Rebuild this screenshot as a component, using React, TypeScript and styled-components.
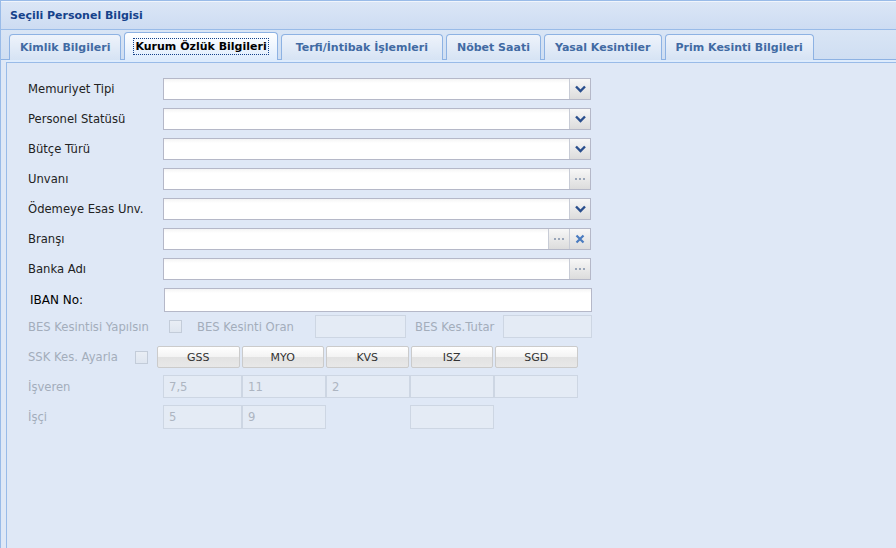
import React from "react";
import styled, { createGlobalStyle, css } from "styled-components";

const GlobalStyle = createGlobalStyle`
    html, body {
        margin: 0;
        padding: 0;
        background: #dfe8f6;
    }
    body {
        font-family: "DejaVu Sans", Tahoma, sans-serif;
        font-size: 11px;
    }
`;

const Panel = styled.div`
    width: 896px;
    height: 548px;
    box-sizing: border-box;
    display: flex;
    flex-direction: column;
    border-left: 1px solid #99bbe8;
    border-top: 1px solid #99bbe8;
    background: #dfe8f6;
    overflow: hidden;
`;

const Header = styled.div`
    height: 29px;
    box-sizing: border-box;
    display: flex;
    align-items: center;
    padding-left: 9px;
    border-top: 1px solid #f0f5fc;
    border-bottom: 1px solid #99bbe8;
    background: linear-gradient(#dbe6f6, #cddcf2);
    color: #15428b;
    font-weight: bold;
    font-size: 11px;
`;

const TabStrip = styled.div`
    height: 30px;
    box-sizing: border-box;
    display: flex;
    align-items: flex-end;
    gap: 3px;
    padding-left: 8px;
    border-bottom: 1px solid #8db2e3;
    background: linear-gradient(#d9e5f5, #cfdef2);
`;

const Tab = styled.div<{ $active?: boolean; $pad?: number }>`
    height: 26px;
    box-sizing: border-box;
    display: flex;
    align-items: center;
    padding: 0 ${(p) => p.$pad ?? 10}px;
    border: 1px solid #8db2e3;
    border-bottom: none;
    border-radius: 4px 4px 0 0;
    font-weight: bold;
    font-size: 11px;
    color: #416aa3;
    background: linear-gradient(#eef3fb, #d6e3f4);
    margin-bottom: -1px;

    ${(p) =>
        p.$active &&
        css`
            height: 28px;
            color: #000;
            background: linear-gradient(#ffffff, #deecfd);
            span {
                outline: 1px dotted #15428b;
                outline-offset: 1px;
            }
        `};
`;

const StripBottom = styled.div`
    height: 3px;
    box-sizing: border-box;
    margin-left: 5px;
    background: #deecfd;
    border-bottom: 1px solid #99bbe8;
`;

const Body = styled.div`
    flex: 1;
    margin-left: 5px;
    border-left: 1px solid #99bbe8;
    padding: 15px 0 0 21px;
    display: flex;
    flex-direction: column;
`;

const Row = styled.div<{ $h?: number; $gap?: number }>`
    display: flex;
    align-items: center;
    height: ${(p) => p.$h ?? 22}px;
    margin-bottom: ${(p) => p.$gap ?? 8}px;
`;

const Label = styled.div<{ $w?: number; $muted?: boolean; $dark?: boolean }>`
    width: ${(p) => p.$w ?? 135}px;
    flex: none;
    font-size: 11.6px;
    color: ${(p) => (p.$muted ? "#a3adbb" : p.$dark ? "#000" : "#222")};
    white-space: nowrap;
`;

const Field = styled.div<{ $w?: number }>`
    width: ${(p) => p.$w ?? 428}px;
    height: 100%;
    box-sizing: border-box;
    display: flex;
    border: 1px solid #b5b8c8;
    background: linear-gradient(#f4f4f4 0, #ffffff 4px);
`;

const Input = styled.div`
    flex: 1;
`;

const Trigger = styled.div`
    width: 20px;
    flex: none;
    display: flex;
    align-items: center;
    justify-content: center;
    border-left: 1px solid #c8ccd6;
    background: linear-gradient(#f7f7f7, #dcdcdc);
`;

const Disabled = styled.div<{ $w?: number }>`
    width: ${(p) => (p.$w ? `${p.$w}px` : "auto")};
    height: 100%;
    box-sizing: border-box;
    border: 1px solid #cdd6e3;
    background: #e4ebf5;
    color: #adb5c1;
    font-size: 11.6px;
    padding-left: 5px;
    display: flex;
    align-items: center;
`;

const Check = styled.div<{ $ml?: number }>`
    width: 13px;
    height: 13px;
    box-sizing: border-box;
    flex: none;
    margin-left: ${(p) => p.$ml ?? 0}px;
    border: 1px solid #c3ccd9;
    background: linear-gradient(#e9eef5, #dfe6f0);
`;

const Buttons = styled.div`
    display: grid;
    grid-template-columns: repeat(5, 82.5px);
    gap: 2px;
    height: 100%;
    margin-left: 9px;
`;

const Button = styled.div`
    box-sizing: border-box;
    border: 1px solid #cbcbcb;
    border-radius: 2px;
    background: linear-gradient(#ffffff 0, #f3f3f3 50%, #e2e2e2 51%, #e8e8e8 100%);
    display: flex;
    align-items: center;
    justify-content: center;
    font-size: 11px;
    color: #333;
`;

const ValueGrid = styled.div`
    display: grid;
    grid-template-columns: 79px repeat(4, 84px);
    height: 100%;
`;

const Chevron = () => (
    <svg width="11" height="8" viewBox="0 0 11 8">
        <path d="M1 1.5 L5.5 6 L10 1.5" fill="none" stroke="#2a4f8d" strokeWidth="2.4" />
    </svg>
);

const Clear = () => (
    <svg width="10" height="10" viewBox="0 0 10 10">
        <path d="M1.5 1.5 L8.5 8.5 M8.5 1.5 L1.5 8.5" stroke="#4a7cc0" strokeWidth="2.2" />
    </svg>
);

const Dots = () => (
    <svg width="12" height="4" viewBox="0 0 12 4">
        <rect x="1" y="1" width="2" height="2" fill="#9aa6b9" />
        <rect x="5" y="1" width="2" height="2" fill="#9aa6b9" />
        <rect x="9" y="1" width="2" height="2" fill="#9aa6b9" />
    </svg>
);

type FieldRowProps = {
    label: string;
    kind: "combo" | "lookup" | "lookupClear";
};

const FieldRow = ({ label, kind }: FieldRowProps) => (
    <Row>
        <Label>{label}</Label>
        <Field>
            <Input />
            <Trigger>{kind === "combo" ? <Chevron /> : <Dots />}</Trigger>
            {kind === "lookupClear" && (
                <Trigger>
                    <Clear />
                </Trigger>
            )}
        </Field>
    </Row>
);

const tabs = [
    "Kimlik Bilgileri",
    "Kurum Özlük Bilgileri",
    "Terfi/İntibak İşlemleri",
    "Nöbet Saati",
    "Yasal Kesintiler",
    "Prim Kesinti Bilgileri",
];

const App = function () {
    return (
        <>
            <GlobalStyle />
            <Panel>
                <Header>Seçili Personel Bilgisi</Header>
                <TabStrip>
                    {tabs.map((t) => (
                        <Tab
                            key={t}
                            $active={t === "Kurum Özlük Bilgileri"}
                            $pad={t.startsWith("Terfi") ? 14 : 10}
                        >
                            <span>{t}</span>
                        </Tab>
                    ))}
                </TabStrip>
                <StripBottom />
                <Body>
                    <FieldRow label="Memuriyet Tipi" kind="combo" />
                    <FieldRow label="Personel Statüsü" kind="combo" />
                    <FieldRow label="Bütçe Türü" kind="combo" />
                    <FieldRow label="Unvanı" kind="lookup" />
                    <FieldRow label="Ödemeye Esas Unv." kind="combo" />
                    <FieldRow label="Branşı" kind="lookupClear" />
                    <FieldRow label="Banka Adı" kind="lookup" />
                    <Row $h={24} $gap={3}>
                        <Label $dark style={{ paddingLeft: 2, width: 134, fontSize: 12 }}>
                            IBAN No:
                        </Label>
                        <Field $w={428} />
                    </Row>
                    <Row $h={23} $gap={8}>
                        <Label $muted>BES Kesintisi Yapılsın</Label>
                        <Check $ml={6} />
                        <Label $muted $w={118} style={{ marginLeft: 15 }}>
                            BES Kesinti Oran
                        </Label>
                        <Disabled $w={91} />
                        <Label $muted $w={88} style={{ marginLeft: 9 }}>
                            BES Kes.Tutar
                        </Label>
                        <Disabled $w={89} />
                    </Row>
                    <Row $h={22} $gap={7}>
                        <Label $muted $w={107}>
                            SSK Kes. Ayarla
                        </Label>
                        <Check />
                        <Buttons>
                            <Button>GSS</Button>
                            <Button>MYO</Button>
                            <Button>KVS</Button>
                            <Button>ISZ</Button>
                            <Button>SGD</Button>
                        </Buttons>
                    </Row>
                    <Row $h={23} $gap={7}>
                        <Label $muted>İşveren</Label>
                        <ValueGrid>
                            <Disabled>7,5</Disabled>
                            <Disabled>11</Disabled>
                            <Disabled>2</Disabled>
                            <Disabled />
                            <Disabled />
                        </ValueGrid>
                    </Row>
                    <Row $h={24}>
                        <Label $muted>İşçi</Label>
                        <ValueGrid>
                            <Disabled>5</Disabled>
                            <Disabled>9</Disabled>
                            <div />
                            <Disabled />
                        </ValueGrid>
                    </Row>
                </Body>
            </Panel>
        </>
    );
};

export default App;
